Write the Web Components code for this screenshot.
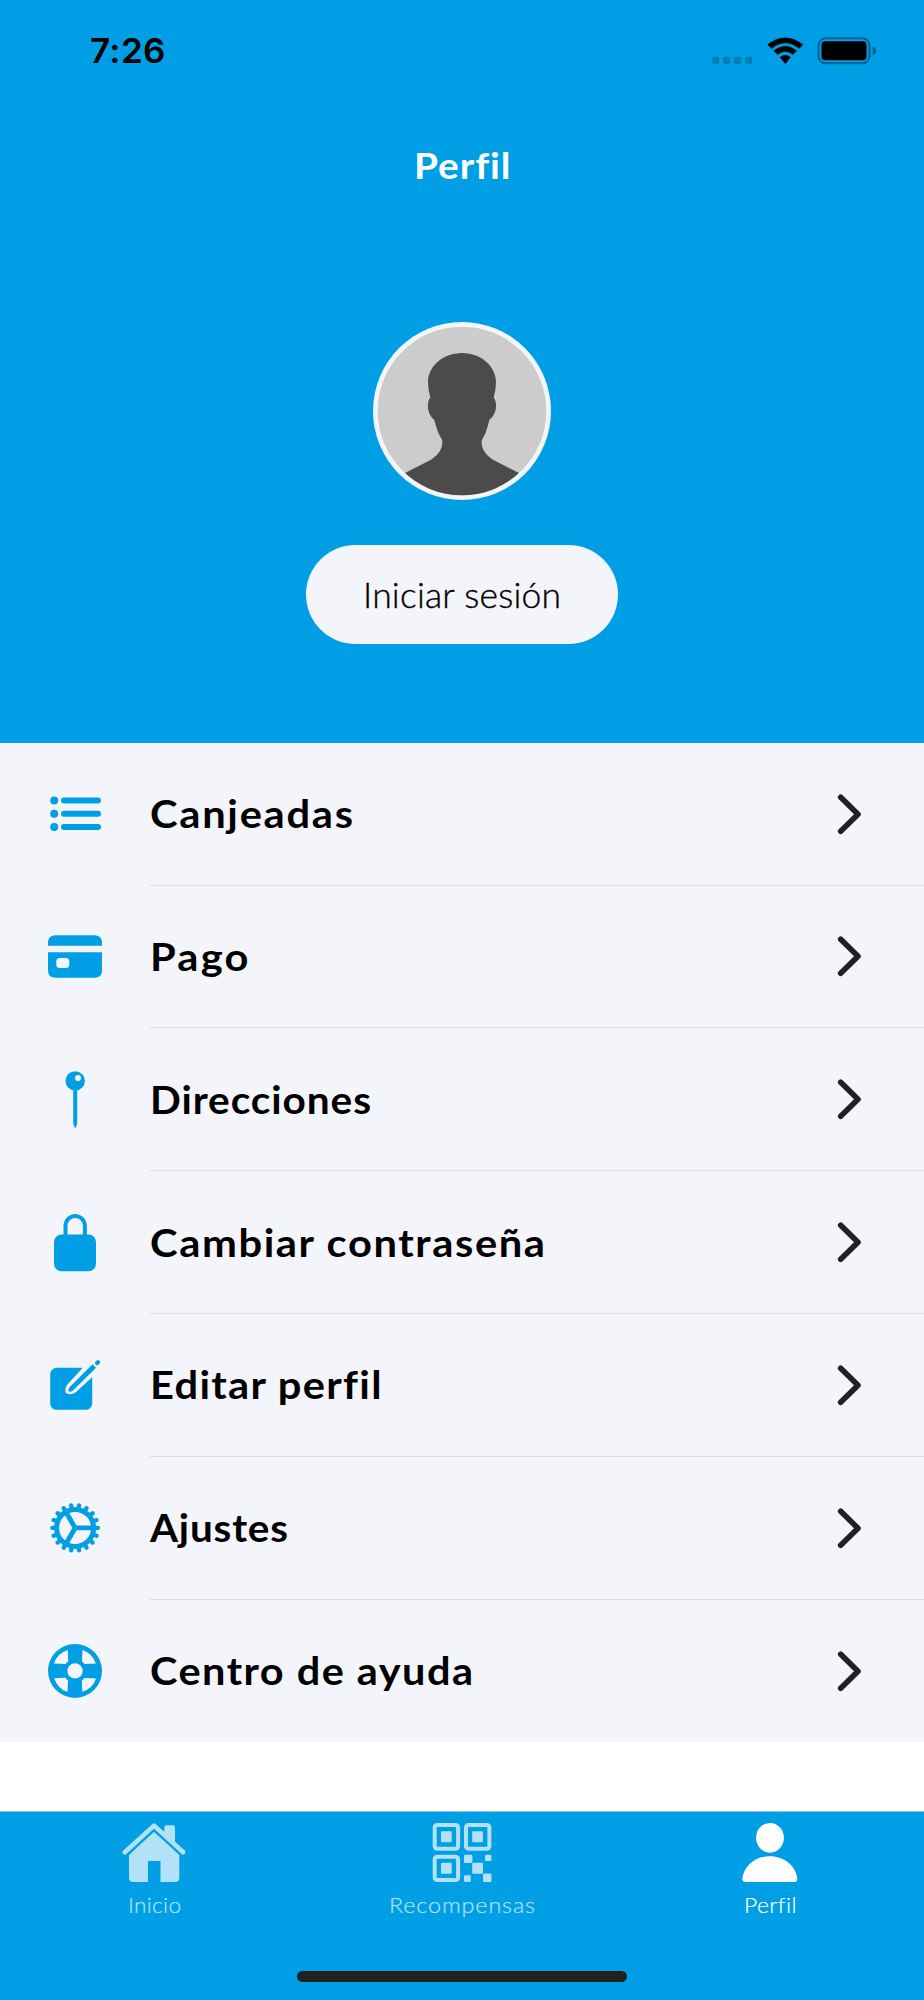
<!DOCTYPE html>
<html lang="es">
<head>
<meta charset="utf-8">
<title>Perfil</title>
<style>
html,body{margin:0;padding:0;background:#fff}
body{font-family:Lato,"Open Sans",sans-serif;width:924px;height:2000px;overflow:hidden}
</style>
</head>
<body>
<profile-screen></profile-screen>
<script>
const define = (name, html, ready) => customElements.define(name, class extends HTMLElement {
  connectedCallback() {
    if (this.shadowRoot) return;
    const root = this.attachShadow({mode: 'open'});
    root.innerHTML = typeof html === 'function' ? html(this) : html;
    if (ready) ready(this, root);
  }
});

// A single line of text that spans the "span" width: half of the extra room
// goes between the letters, the rest widens the letters themselves.
define('wide-text', `<style>:host{display:block;white-space:nowrap;font-variant-ligatures:none}span{display:inline-block;transform-origin:0 50%}</style><span></span>`, (el, root) => {
  const s = root.querySelector('span');
  s.textContent = el.getAttribute('text');
  const span = parseFloat(el.getAttribute('span'));
  const natural = s.getBoundingClientRect().width;
  const gap = (span - natural) / 2 / (s.textContent.length - 1);
  s.style.letterSpacing = gap + 'px';
  s.style.transform = `scaleX(${span / ((span + natural) / 2)})`;
  el.style.width = span + 'px';
});

define('status-bar', `<style>
:host{display:flex;height:101px;justify-content:space-between;align-items:center;padding:0 47px 0 90px;box-sizing:border-box;color:#000}
wide-text{font:600 34.5px/40px Inter,sans-serif}
svg{display:block}
</style>
<wide-text text="7:26" span="75.5"></wide-text>
<svg width="166" height="30" viewBox="0 0 166 30">
<g fill="#007fb4"><rect x="1" y="20.7" width="7.3" height="7.2" rx="2"/><rect x="12" y="20.7" width="7.3" height="7.2" rx="2"/><rect x="23" y="20.7" width="7.3" height="7.2" rx="2"/><rect x="34" y="20.7" width="7.3" height="7.2" rx="2"/></g>
<path d="M56.7 8.6Q74 -5.2 91.9 8.6L88.2 12.4Q74.3 1.3 60.5 12.4ZM62.8 14.8Q74.3 5.6 85.6 14.8L81.9 18.4Q74.3 12.4 66.6 18.4ZM69.2 21.2Q74.3 17.3 79.4 21.2L74.3 27.7Z" stroke="#000" stroke-width=".5" stroke-linejoin="round"/>
<rect x="107.500" y="2.300" width="51" height="25" rx="7.200" fill="none" stroke="#00618e" stroke-width="2"/>
<rect x="110.500" y="5.300" width="45" height="19" rx="4"/><path d="M161.700 10.500v9q3.300-1.500 3.300-4.500t-3.300-4.500z" fill="#00618e"/>
</svg>`);

define('user-avatar', `<style>:host{display:block;width:178px;height:178px}svg{display:block}</style>
<svg width="178" height="178" viewBox="0 0 178 178"><defs><clipPath id="c"><circle cx="89" cy="89" r="84.3"/></clipPath></defs>
<circle cx="89" cy="89" r="89" fill="#f4f5fa"/><circle cx="89" cy="89" r="84.3" fill="#ccc"/>
<path clip-path="url(#c)" fill="#4b4b4b" d="M89 31C69 31 55 45 55 60Q55 67 57.3 75.7C54 79 53 91 61.3 98Q64.500 111 69.300 118.300C70 128 64 134 57 138.300L32 151L20 178H158L146 151L121 138.300C114 134 108 128 108.700 118.300Q113.500 111 116.300 98C125 91 124 79 120.700 75.700Q123 67 123 60C123 45 109 31 89 31Z"/></svg>`);

define('pill-button', `<style>:host{display:flex;width:312px;height:99px;border-radius:49.5px;background:#f4f5fa;color:#000;justify-content:center;align-items:center}</style><slot></slot>`);

define('profile-header', `<style>
:host{display:flex;flex-direction:column;align-items:center;height:742.7px;background:#009fe5}
status-bar{align-self:stretch;flex:none}
.title{font:700 37px/44px Lato,sans-serif;color:#fff;margin-top:42px;margin-right:1px}
user-avatar{margin-top:135px}
pill-button{margin-top:45px}
pill-button wide-text{font:300 35px/44px Lato,sans-serif;margin-top:-2px;-webkit-text-stroke:.35px}
</style>
<status-bar></status-bar><wide-text class="title" text="Perfil" span="96"></wide-text>
<user-avatar></user-avatar>
<pill-button><wide-text text="Iniciar sesión" span="198"></wide-text></pill-button>`);

const polar = (a, r, cx, cy) => `${cx + r * Math.cos(a * Math.PI / 180)} ${cy + r * Math.sin(a * Math.PI / 180)}`;
const teeth = Array.from({length: 18}, (_, i) => `M${polar(i * 20, 19, 30.1, 29.9)}L${polar(i * 20, 22.800, 30.1, 29.9)}`).join('');
const spokes = [0, 120, 240].map(a => `M30.1 29.9L${polar(a, 18, 30.1, 29.9)}`).join('');
const pane = 'M9 22.1Q12 12.500 22.700 8.800L23.200 20.200Q21.700 20.900 20.700 22.600Z';
const icons = {
  list: `<path d="M19 16.500H53M19 29.800H53M19 43.100H53" stroke="currentColor" stroke-width="6" stroke-linecap="round"/><circle cx="9.200" cy="16.500" r="4"/><circle cx="9.200" cy="29.800" r="4"/><circle cx="9.200" cy="43.100" r="4"/>`,
  card: `<path d="M3 18.700V16Q3 8.300 10.700 8.300H49.300Q57 8.300 57 16V18.700ZM3 25.300H57V43.300Q57 50.800 49.300 50.800H10.700Q3 50.800 3 43.300Z"/><rect x="11.300" y="31" width="13" height="10" rx="3.500" fill="#f4f5fa"/>`,
  pin: `<circle cx="30.200" cy="10.900" r="9.700"/><circle cx="33" cy="8" r="3" fill="#f4f5fa"/><path d="M28.200 19H32.200V54L30.200 58.500L28.200 54Z"/>`,
  lock: `<rect x="9" y="21.600" width="42" height="36.700" rx="7.500"/><path d="M20.500 24V13a9.700 10 0 0 1 19.400 0V24" fill="none" stroke="currentColor" stroke-width="4"/>`,
  edit: `<rect x="5.200" y="12.800" width="42" height="42" rx="6.500"/><path d="M38.500 12L22 30Q19.500 34 20.800 38Q25.500 40.500 30.500 37.500L49 20.500L55 8L48 5Z" fill="#f4f5fa"/><path d="M47.500 10.600L25.700 32.400Q24.400 34 24.400 35.600Q26 35.800 27.600 34.600L49.700 12.800Z" stroke="currentColor" stroke-width="2" stroke-linejoin="round"/><path d="M52.100 8.100L53 7.200" stroke="currentColor" stroke-width="4.300" stroke-linecap="round"/>`,
  gear: `<circle cx="30.100" cy="29.900" r="18.500" fill="none" stroke="currentColor" stroke-width="5"/><path d="${teeth}" stroke="currentColor" stroke-width="4.300" stroke-linecap="round"/><path d="${spokes}" stroke="currentColor" stroke-width="4.900"/>`,
  help: `<circle cx="30" cy="29.900" r="27"/><g transform="translate(0 .3)" fill="#f4f5fa"><circle cx="30" cy="29.600" r="7.700"/>${[0, 90, 180, 270].map(a => `<path transform="rotate(${a} 30 29.600)" d="${pane}"/>`).join('')}</g>`
};

define('menu-row', el => `<style>
:host{display:flex;align-items:stretch;height:142.84px;box-sizing:border-box;padding-left:45px;color:#000}
.icon{flex:none;align-self:center;color:#009fe5;fill:currentColor}
.body{flex:1;display:flex;align-items:center;justify-content:space-between;margin-left:45px;padding-right:58px;border-bottom:1px solid #dcdde2}
:host([last]) .body{border-color:transparent}
wide-text{font:700 39px/48px Lato,sans-serif;margin:-1px 0 0 -.5px}
</style>
<svg class="icon" width="60" height="60" viewBox="0 0 60 60">${icons[el.getAttribute('icon')]}</svg>
<div class="body"><wide-text text="${el.getAttribute('label')}" span="${el.getAttribute('span')}"></wide-text>
<svg width="32" height="44" viewBox="0 0 32 44"><path d="M6.700 5.200L24 22.300L6.700 39.300" fill="none" stroke="#202124" stroke-width="5.600" stroke-linecap="round" stroke-linejoin="round"/></svg></div>`);

define('menu-list', `<style>:host{display:block;background:#f4f5fa}</style><slot></slot>`);

const tabs = {
  home: `<svg width="70" height="64" viewBox="0 0 70 64"><path d="M5.800 32.300L35 5.600L64.200 32.300" fill="none" stroke="currentColor" stroke-width="4.600" stroke-linecap="round" stroke-linejoin="round"/><path d="M45.300 14V7.500Q45.300 5.300 47.500 5.300H53.800Q56 5.300 56 7.500V24.500ZM35 11.700L60.300 35V58Q60.300 62 56.300 62H41.500V41H29V62H14Q10 62 10 58V35Z"/></svg>`,
  qr: `<svg width="60" height="64" viewBox="0 0 60 64"><g fill="none" stroke="currentColor" stroke-width="4"><rect x="2.700" y="5" width="23.400" height="23.700" rx="2.500"/><rect x="34" y="5" width="23.400" height="23.700" rx="2.500"/><rect x="2.700" y="36.700" width="23.400" height="23.300" rx="2.500"/></g><rect x="9" y="11.300" width="10.700" height="11" rx="1"/><rect x="40.200" y="11.300" width="10.700" height="11" rx="1"/><rect x="9" y="42.700" width="10.700" height="11" rx="1"/><rect x="32" y="34.700" width="8.400" height="8.300" rx="1.200"/><rect x="53" y="34.700" width="6.400" height="6.400" rx="1.200"/><rect x="40.200" y="42.700" width="10.800" height="11" rx="1.200"/><rect x="32" y="55.300" width="6.700" height="6.700" rx="1.200"/><rect x="51" y="53.500" width="8.400" height="8.500" rx="1.200"/></svg>`,
  person: `<svg width="62" height="64" viewBox="0 0 62 64"><ellipse cx="31" cy="17.800" rx="13.900" ry="14.900"/><path d="M6.300 62Q3.300 62 3.300 58.500C5 46 16 36.300 30.800 36.300S56.600 46 58.300 58.500Q58.300 62 55.300 62Z"/></svg>`
};
define('tab-item', el => `<style>
:host{display:flex;flex:1;flex-direction:column;align-items:center;padding-top:8px;color:#b3e2f8;fill:currentColor}
:host([active]){color:#fff}
svg{display:block}
wide-text{font:300 22px/28px Lato,sans-serif;margin-top:7px;-webkit-text-stroke:.2px}
</style>${tabs[el.getAttribute('icon')]}<wide-text text="${el.getAttribute('label')}" span="${el.getAttribute('span')}"></wide-text>`);

define('tab-bar', `<style>
:host{display:flex;flex-direction:column;justify-content:space-between;align-items:center;height:189px;box-sizing:border-box;border-top:1px solid #8fc4dc;background:#009fe5;padding-bottom:18px}
nav{display:flex;align-self:stretch}
.home{width:330px;height:11px;border-radius:6px;background:#212121}
</style><nav><slot></slot></nav><div class="home"></div>`);

define('profile-screen', `<style>
:host{display:flex;flex-direction:column;width:924px;height:2000px;background:#fff}
tab-bar{margin-top:auto}
</style>
<profile-header></profile-header>
<menu-list>
<menu-row icon="list" label="Canjeadas" span="203"></menu-row>
<menu-row icon="card" label="Pago" span="98.5"></menu-row>
<menu-row icon="pin" label="Direcciones" span="221"></menu-row>
<menu-row icon="lock" label="Cambiar contraseña" span="395"></menu-row>
<menu-row icon="edit" label="Editar perfil" span="231"></menu-row>
<menu-row icon="gear" label="Ajustes" span="138"></menu-row>
<menu-row icon="help" label="Centro de ayuda" span="323" last></menu-row>
</menu-list>
<tab-bar>
<tab-item icon="home" label="Inicio" span="53"></tab-item>
<tab-item icon="qr" label="Recompensas" span="146"></tab-item>
<tab-item icon="person" label="Perfil" span="52" active></tab-item>
</tab-bar>`);
</script>
</body>
</html>
